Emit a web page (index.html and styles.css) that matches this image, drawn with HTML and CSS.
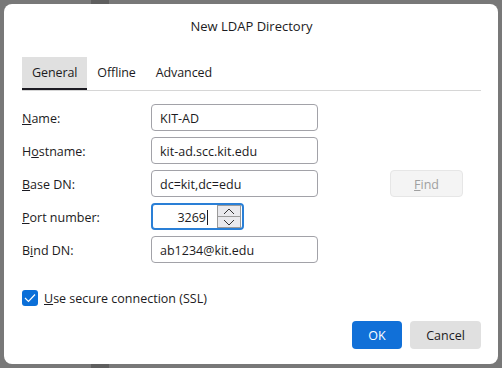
FILE: index.html
```html
<!DOCTYPE html>
<html lang="en">
<head>
    <meta charset="UTF-8">
    <title>New LDAP Directory</title>
    <link rel="stylesheet" href="styles.css">
</head>
<body>
    <div class="dialog">
        <div class="title">New LDAP Directory</div>
        <div class="tabs">
            <div class="tab active">General</div>
            <div class="tab">Offline</div>
            <div class="tab">Advanced</div>
        </div>
        <div class="form">
            <label class="label"><u>N</u>ame:</label>
            <div class="field">KIT-AD</div>

            <label class="label">H<u>o</u>stname:</label>
            <div class="field">kit-ad.scc.kit.edu</div>

            <label class="label"><u>B</u>ase DN:</label>
            <div class="field">dc=kit,dc=edu</div>
            <button class="find-btn" disabled><u>F</u>ind</button>

            <label class="label"><u>P</u>ort number:</label>
            <div class="port">
                <span class="port-value">3269<span class="caret"></span></span>
                <span class="spinner">
                    <span class="spin">
                        <svg width="12" height="7" viewBox="0 0 12 7"><polyline points="1,6 6,1 11,6" fill="none" stroke="#333" stroke-width="1"/></svg>
                    </span>
                    <span class="spin">
                        <svg width="12" height="7" viewBox="0 0 12 7"><polyline points="1,1 6,6 11,1" fill="none" stroke="#333" stroke-width="1"/></svg>
                    </span>
                </span>
            </div>

            <label class="label">B<u>i</u>nd DN:</label>
            <div class="field">ab1234@kit.edu</div>
        </div>
        <div class="check-row">
            <span class="checkbox">
                <svg width="12" height="10" viewBox="0 0 12 10"><polyline points="1,5 4.5,8.5 11,1.5" fill="none" stroke="#fff" stroke-width="1.2"/></svg>
            </span>
            <span><u>U</u>se secure connection (SSL)</span>
        </div>
        <div class="buttons">
            <button class="btn primary">OK</button>
            <button class="btn">Cancel</button>
        </div>
    </div>
</body>
</html>
```

FILE: styles.css
```css
body {
    margin: 0;
    width: 502px;
    height: 368px;
    background-color: #787878;
    background-image: linear-gradient(#5f5f5f, #5f5f5f);
    background-size: 18px 100%;
    background-position: 91px 0;
    background-repeat: no-repeat;
    font-family: "Open Sans", "Noto Sans", sans-serif;
    font-size: 12.5px;
    color: #1c1b22;
    overflow: hidden;
}
.dialog {
    margin: 4px;
    width: 494px;
    height: 360px;
    box-sizing: border-box;
    background: #fff;
    border-radius: 8px;
    padding: 0 17px 0 18px;
    display: flex;
    flex-direction: column;
}
.title {
    padding-top: 13px;
    line-height: 18px;
    text-align: center;
    font-size: 13px;
    margin-bottom: 22px;
}
.tabs {
    display: flex;
    border-bottom: 1px solid #d6d6d6;
}
.tab {
    padding: 0 10px;
    height: 31px;
    line-height: 31px;
    border-bottom: 2px solid transparent;
    letter-spacing: -0.1px;
}
.tab.active {
    background: #e0e0e0;
    border-bottom-color: #1c1b22;
    padding: 0 10px 0 10px;
}
.form {
    margin-top: 13px;
    display: grid;
    grid-template-columns: 129px 167px 72px 73px;
    grid-auto-rows: 27px;
    row-gap: 6px;
    align-items: center;
}
.label {
    grid-column: 1;
    padding-top: 2px;
}
.field {
    grid-column: 2;
    height: 27px;
    box-sizing: border-box;
    border: 1px solid #a2a2a8;
    border-radius: 4px;
    padding: 1px 8px 0;
    line-height: 25px;
}
.find-btn {
    grid-column: 4;
    height: 27px;
    background: #f4f4f4;
    border: 1px solid #e6e6e6;
    border-radius: 4px;
    color: #a0a0a0;
    font: inherit;
    padding: 1px 0 0;
}
.port {
    grid-column: 2;
    width: 93px;
    height: 27px;
    box-sizing: border-box;
    border: 2px solid #2a7fd6;
    border-radius: 4px;
    display: flex;
    align-items: center;
    justify-content: flex-end;
    padding-right: 1px;
}
.port-value {
    margin-right: 9px;
    padding-top: 1px;
    display: flex;
    align-items: center;
}
.caret {
    display: inline-block;
    width: 1px;
    height: 15px;
    background: #1c1b22;
    margin-left: 1px;
}
.spinner {
    display: flex;
    flex-direction: column;
    width: 24px;
    height: 23px;
}
.spin {
    flex: 1;
    background: #e9e9ed;
    border: 1px solid #9a9a9a;
    display: flex;
    align-items: center;
    justify-content: center;
}
.spin + .spin {
    border-top: none;
}
.check-row {
    margin-top: 27px;
    display: flex;
    align-items: center;
    gap: 6px;
    height: 16px;
}
.checkbox {
    width: 16px;
    height: 16px;
    border-radius: 3px;
    background: #0b6fd8;
    display: flex;
    align-items: center;
    justify-content: center;
}
.buttons {
    margin-top: 15px;
    display: flex;
    justify-content: flex-end;
    gap: 8px;
}
.btn {
    height: 28px;
    border: none;
    border-radius: 4px;
    background: #e0e0e0;
    color: #1c1b22;
    font: inherit;
    padding: 0;
    width: 71px;
}
.btn.primary {
    width: 50px;
    background: #1170d8;
    color: #fff;
}
```
